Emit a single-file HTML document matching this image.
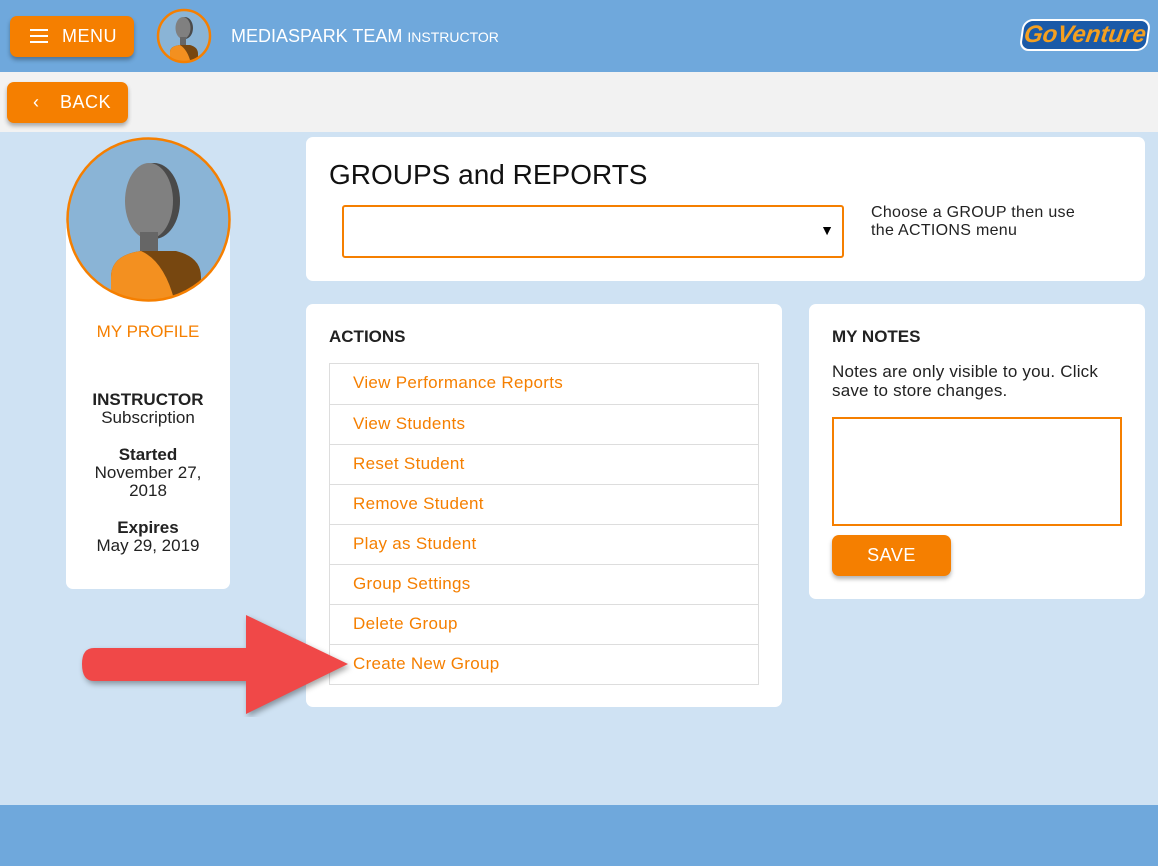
<!DOCTYPE html>
<html><head><style>
*{box-sizing:border-box;margin:0;padding:0}
body{width:1158px;height:866px;overflow:hidden;background:#cfe2f3;font-family:"Liberation Sans",sans-serif;position:relative}
.hdr{position:absolute;left:0;top:0;width:1158px;height:72px;background:#6fa8dc}
.bar{position:absolute;left:0;top:72px;width:1158px;height:60px;background:#f2f2f2}
.ftr{position:absolute;left:0;top:805px;width:1158px;height:61px;background:#6fa8dc}
.btn{position:absolute;background:#f57f00;color:#fff;border-radius:7px;box-shadow:0 3px 4px rgba(0,0,0,.3);font-size:18px;letter-spacing:.5px}
.card{position:absolute;background:#fff;border-radius:7px}
.o{color:#f57f00}
.list{position:absolute;left:329px;top:363px;width:430px;border:1px solid #ddd}
.list div{height:40px;border-top:1px solid #ddd;padding-left:23px;line-height:37px;font-size:17px;color:#f57f00;letter-spacing:.3px}
.list div:first-child{border-top:none}
</style></head><body>
<div class="hdr"></div>
<div class="bar"></div>
<div class="ftr"></div>
<div class="btn" style="left:10px;top:16px;width:124px;height:41px">
 <div style="position:absolute;left:20px;top:13px;width:18px;height:2px;background:#fff;box-shadow:0 6px 0 #fff,0 12px 0 #fff"></div>
 <span style="position:absolute;left:52px;top:10px">MENU</span></div>
<svg style="position:absolute;left:156px;top:8px" width="56" height="56" viewBox="0 0 56 56"><defs><clipPath id="c1"><circle cx="28" cy="28" r="26"/></clipPath></defs><circle cx="28" cy="28" r="26" fill="#8ab4d6"/><g clip-path="url(#c1)"><ellipse cx="29" cy="20" rx="8" ry="11" fill="#4a4a4a"/><ellipse cx="27" cy="20" rx="7.5" ry="11" fill="#808080"/><rect x="24" y="29" width="6" height="10" fill="#666"/><path d="M14 56 L14 44 Q14 38 24 37 L34 37 Q42 39 42 46 L42 56 Z" fill="#774710"/><path d="M14 56 L14 44 Q14 38 24 37 Q32 42 35 56Z" fill="#f39020"/></g><circle cx="28" cy="28" r="26" fill="none" stroke="#f57f00" stroke-width="2.5"/></svg>
<div style="position:absolute;left:231px;top:26px;color:#fff;font-size:18px">MEDIASPARK TEAM <span style="font-size:14px">INSTRUCTOR</span></div>
<div style="position:absolute;left:1021px;top:19px;width:128px;height:32px;background:#1a5aa8;border:2px solid #fff;border-radius:10px;transform:skewX(-8deg);color:#f5a020;font-weight:bold;font-style:italic;font-size:24px;line-height:27px;text-align:center">GoVenture</div>
<div class="btn" style="left:7px;top:82px;width:121px;height:41px">
 <span style="position:absolute;left:26px;top:10px">&#8249;</span><span style="position:absolute;left:53px;top:10px">BACK</span></div>

<div class="card" style="left:66px;top:218px;width:164px;height:371px"></div>
<svg style="position:absolute;left:66px;top:137px" width="165" height="165" viewBox="0 0 165 165"><defs><clipPath id="c2"><circle cx="82.5" cy="82.5" r="81"/></clipPath></defs><circle cx="82.5" cy="82.5" r="81" fill="#8ab4d6"/><g clip-path="url(#c2)"><ellipse cx="88" cy="64" rx="26" ry="38" fill="#4a4a4a"/><ellipse cx="83" cy="64" rx="24" ry="38" fill="#808080"/><rect x="74" y="95" width="18" height="24" fill="#666"/><path d="M45 170 L45 140 Q45 118 75 114 L110 114 Q135 120 135 140 L135 170Z" fill="#774710"/><path d="M45 170 L45 140 Q45 118 75 114 Q100 125 110 170Z" fill="#f39020"/></g><circle cx="82.5" cy="82.5" r="81" fill="none" stroke="#f57f00" stroke-width="2.5"/></svg>
<div class="o" style="position:absolute;left:66px;width:164px;top:322px;text-align:center;font-size:17px">MY PROFILE</div>
<div style="position:absolute;left:66px;width:164px;top:391px;text-align:center;font-size:17px;color:#222;line-height:18px">
<b style="font-weight:600">INSTRUCTOR</b><br>Subscription<br><div style="height:19px"></div><b style="font-weight:600">Started</b><br>November 27,<br>2018<br><div style="height:19px"></div><b style="font-weight:600">Expires</b><br>May 29, 2019</div>

<div class="card" style="left:306px;top:137px;width:839px;height:144px"></div>
<div style="position:absolute;left:329px;top:159px;font-size:28px;color:#111">GROUPS and REPORTS</div>
<div style="position:absolute;left:342px;top:205px;width:502px;height:53px;border:2px solid #f57f00;border-radius:3px"><span style="position:absolute;right:8px;top:15px;font-size:14px">&#9660;</span></div>
<div style="position:absolute;left:871px;top:204px;font-size:16px;color:#222;line-height:18px;letter-spacing:.3px">Choose a GROUP then use<br>the ACTIONS menu</div>

<div class="card" style="left:306px;top:304px;width:476px;height:403px"></div>
<div style="position:absolute;left:329px;top:327px;font-size:17px;font-weight:600;color:#222">ACTIONS</div>
<div class="list"><div>View Performance Reports</div><div>View Students</div><div>Reset Student</div><div>Remove Student</div><div>Play as Student</div><div>Group Settings</div><div>Delete Group</div><div>Create New Group</div></div>

<div class="card" style="left:809px;top:304px;width:336px;height:295px"></div>
<div style="position:absolute;left:832px;top:327px;font-size:17px;font-weight:600;color:#222">MY NOTES</div>
<div style="position:absolute;left:832px;top:362px;font-size:17px;color:#222;line-height:19px;letter-spacing:.2px">Notes are only visible to you. Click<br>save to store changes.</div>
<div style="position:absolute;left:832px;top:417px;width:290px;height:109px;border:2px solid #f57f00"></div>
<div class="btn" style="left:832px;top:535px;width:119px;height:41px;text-align:center;line-height:41px">SAVE</div>

<svg style="position:absolute;left:78px;top:612px" width="280" height="105" viewBox="0 0 280 105"><path d="M16 36 L168 36 L168 3 L270 52 L168 102 L168 69 L16 69 Q4 69 4 52 Q4 36 16 36Z" fill="#f04848" style="filter:drop-shadow(2px 3px 3px rgba(0,0,0,.35))"/></svg>
</body></html>
